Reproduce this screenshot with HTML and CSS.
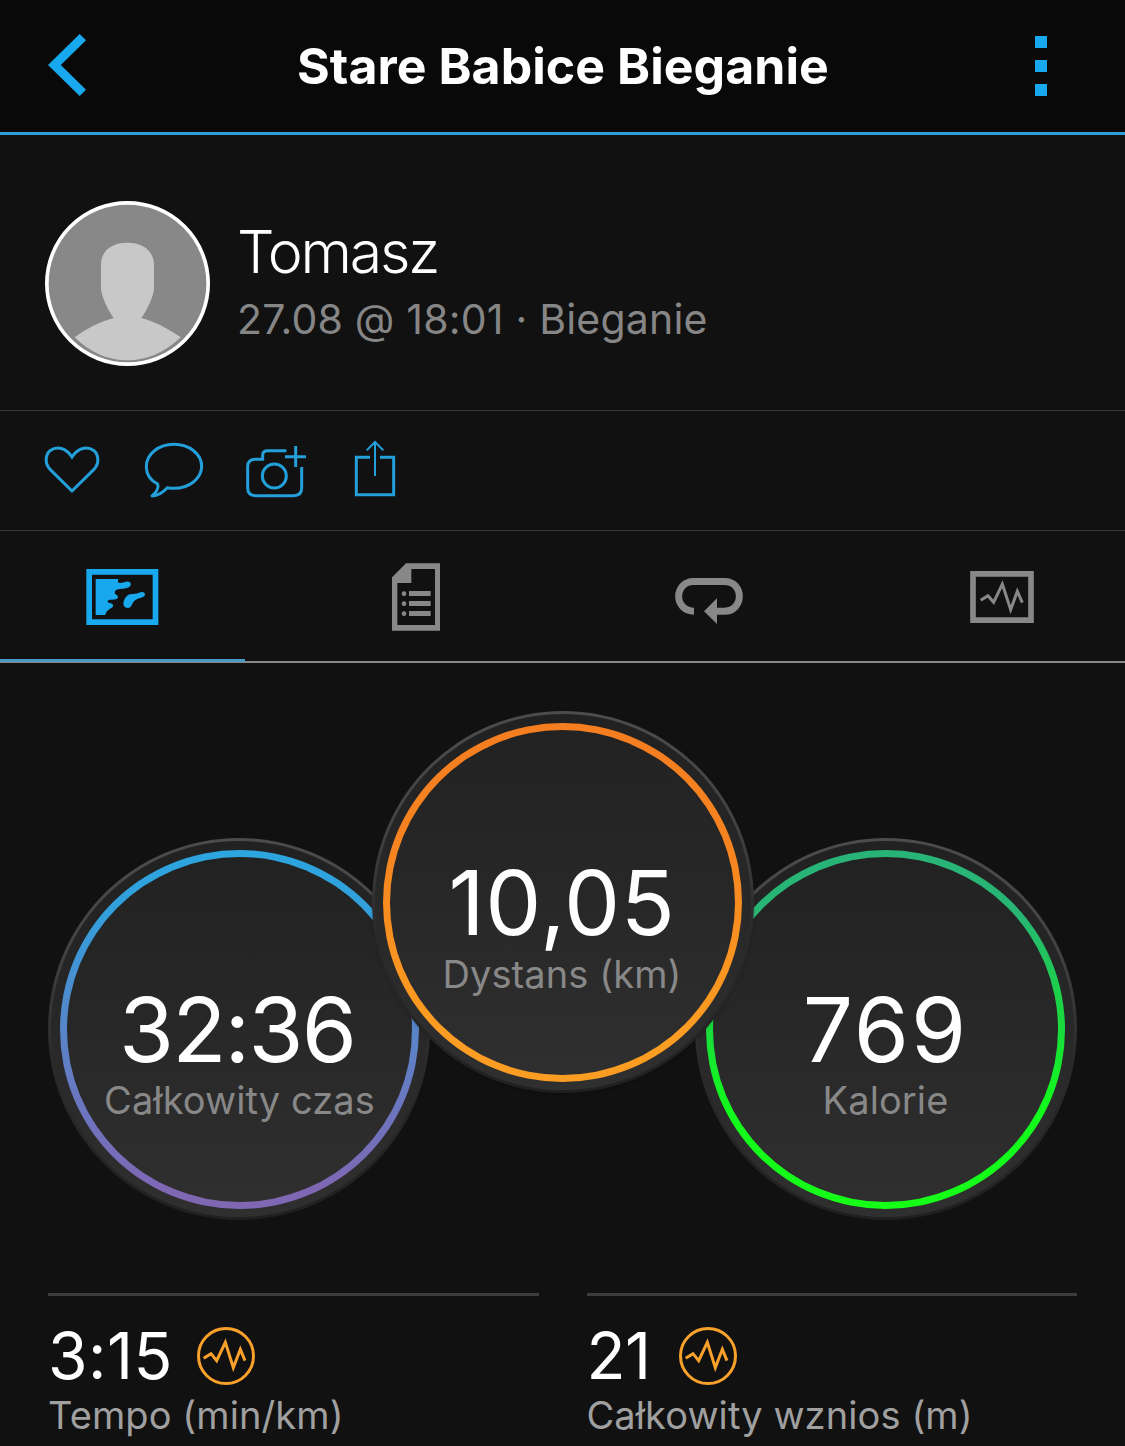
FILE: index.html
```html
<!DOCTYPE html>
<html lang="pl">
<head>
<meta charset="utf-8">
<title>Stare Babice Bieganie</title>
<link rel="stylesheet" href="styles.css">
</head>
<body>
<header class="topbar">
  <svg class="topbar-back" viewBox="0 0 38 62"><path d="M31.7 0 38 6.2 12.8 31 38 55.8 31.7 62 0 31Z"/></svg>
  <h1 class="topbar-title">Stare Babice Bieganie</h1>
  <svg class="topbar-menu" viewBox="0 0 12 60"><path d="M0 0h12v12H0zM0 24h12v12H0zM0 48h12v12H0z"/></svg>
</header>

<section class="profile">
  <svg class="avatar" viewBox="45 33 495 495">
    <circle cx="292.500" cy="280.500" r="242" fill="#888" stroke="#fff" stroke-width="11"/>
    <path fill="#c8c8c8" d="M134 442C170 415 212 394 251 384C233 359 215 320 213 297V222C215 180 246 158 292 158S369 180 372 222V297C370 320 352 359 334 384C373 394 414 415 452 442Q380 511 292 511T134 442Z"/>
  </svg>
  <div class="profile-text">
    <div class="profile-name">Tomasz</div>
    <div class="profile-meta">27.08 @ 18:01 · Bieganie</div>
  </div>
</section>

<nav class="actions">
  <svg width="60" height="58" viewBox="42 120 180 174"><path stroke-width="9" d="M126 273 61 209C43 191 46 165 60 152C81 137 108 143 126 171C144 143 171 137 192 152C206 165 209 191 191 209Z"/></svg>
  <svg width="61" height="58" viewBox="342 120 183 174"><path stroke-width="9" stroke-linejoin="round" d="M366 288C379 278 387 263 383 252C362 241 349 223 349 200C349 162 386 133 432 133S515 162 515 199S477 265 432 265Q422 265 412 263C400 276 386 287 366 288Z"/></svg>
  <svg width="63" height="58" viewBox="645 120 189 174"><path stroke-width="9" d="M769 152H713Q698 152 698 165V178H677Q653 178 653 200V264Q653 287 677 287H791Q815 287 815 264V201M797 138V201M765 170H828"/><circle stroke-width="9" cx="733" cy="228" r="36"/></svg>
  <svg width="50" height="58" viewBox="954 120 150 174"><path stroke-width="9" d="M1020 172H979V284H1091V172H1050"/><path stroke-width="6" d="M1035 228V126M1010 151 1035 126 1060 151"/></svg>
</nav>

<nav class="tabs">
  <div class="tab tab-active">
    <svg width="74" height="70" viewBox="77 66 222 210"><path fill="none" stroke="currentColor" stroke-width="17" d="M86.500 95.500H285.500V246.500H86.500Z"/><path d="M106 117H174C171 124 173 130 181 129L198 125C208 124 213 129 211 135C209 143 199 144 188 146C174 146 164 149 163 157C163 164 173 165 173 172C171 180 161 179 148 179C139 181 141 187 148 189C157 190 160 195 157 201C151 207 138 209 135 225H106ZM203 165C212 159 225 164 236 158C246 153 255 157 254 164C252 172 242 172 231 177C213 183 217 204 202 204C184 204 186 178 203 165Z"/></svg>
  </div>
  <div class="tab">
    <svg width="50" height="70" viewBox="993 66 150 210"><path fill-rule="evenodd" d="M1038 70H1140V272H996V112ZM1054 87V129H1012V255H1125V87Z"/><path d="M1047 153H1112V168H1047ZM1047 183H1112V198H1047ZM1047 213H1112V228H1047Z"/><circle cx="1032" cy="161" r="7"/><circle cx="1032" cy="191" r="7"/><circle cx="1032" cy="221" r="7"/></svg>
  </div>
  <div class="tab">
    <svg width="70" height="70" viewBox="102 66 210 210"><path fill="none" stroke="currentColor" stroke-width="21" d="M162 213.500C134 213.500 116 193 116 169S134 124.500 160 124.500H254C281 124.500 298 145 298 169S281 213.500 254 213.500H226"/><path d="M231 175V252L192 214Z"/></svg>
  </div>
  <div class="tab">
    <svg width="66" height="70" viewBox="987 66 198 210"><path fill="none" stroke="currentColor" stroke-width="17" d="M999 101.500H1173V240.500H999Z"/><path fill="none" stroke="currentColor" stroke-width="9" d="M1022 181 1044 167 1061 187 1087 132 1112 209 1132 154 1147 188"/></svg>
  </div>
</nav>

<main>
  <section class="gauges">
    <div class="gauge gauge-side gauge-time">
      <div class="gauge-ring">
        <div class="gauge-value">32:36</div>
        <div class="gauge-label">Całkowity czas</div>
      </div>
    </div>
    <div class="gauge gauge-main gauge-distance">
      <div class="gauge-ring">
        <div class="gauge-value">10,05</div>
        <div class="gauge-label">Dystans (km)</div>
      </div>
    </div>
    <div class="gauge gauge-side gauge-calories">
      <div class="gauge-ring">
        <div class="gauge-value">769</div>
        <div class="gauge-label">Kalorie</div>
      </div>
    </div>
  </section>

  <section class="stats">
    <div class="stat">
      <div class="stat-row">
        <span class="stat-value stat-pace">3:15</span>
        <svg class="stat-icon" viewBox="501 141 174 174"><circle cx="588" cy="228" r="82.500" stroke-width="9"/><path stroke-width="9" d="M521 235 543 221 560 242 586 187 610 263 631 208 645 242"/></svg>
      </div>
      <div class="stat-label">Tempo (min/km)</div>
    </div>
    <div class="stat">
      <div class="stat-row">
        <span class="stat-value stat-climb">21</span>
        <svg class="stat-icon" viewBox="501 141 174 174"><circle cx="588" cy="228" r="82.500" stroke-width="9"/><path stroke-width="9" d="M521 235 543 221 560 242 586 187 610 263 631 208 645 242"/></svg>
      </div>
      <div class="stat-label">Całkowity wznios (m)</div>
    </div>
  </section>
</main>
</body>
</html>
```
FILE: styles.css
```css
* { box-sizing: border-box; }

body {
  margin: 0;
  height: 1446px;
  overflow: hidden;
  background: #111;
  color: #fff;
  font-family: Inter, "Liberation Sans", sans-serif;
}

svg { display: block; flex: none; }

.topbar {
  display: flex;
  align-items: center;
  justify-content: space-between;
  height: 135px;
  padding: 0 78px 0 48px;
  background: #090909;
  border-bottom: 3px solid #2e9edb;
}
.topbar-back { width: 38px; height: 62px; margin-bottom: 2px; fill: #18a8ee; }
.topbar-menu { width: 12px; height: 60px; fill: #18a8ee; }
.topbar-title {
  margin: 0 0 0 5px;
  font-size: 50px;
  font-weight: 700;
  line-height: 60px;
  letter-spacing: 0.05px;
  white-space: nowrap;
}

.profile {
  display: flex;
  gap: 27px;
  height: 276px;
  padding: 66px 45px 0;
  border-bottom: 1px solid #363636;
}
.avatar { width: 165px; height: 165px; }
.profile-text { padding-top: 15px; white-space: nowrap; }
.profile-name { font-size: 59px; font-weight: 300; line-height: 71px; letter-spacing: -2.2px; }
.profile-meta { font-size: 41px; line-height: 65px; color: #868686; letter-spacing: 0.2px; }

.actions {
  display: flex;
  gap: 40px;
  height: 120px;
  padding: 29px 44px 0;
  border-bottom: 1px solid #363636;
}
.actions svg { fill: none; stroke: #239fda; }

.tabs {
  display: flex;
  justify-content: space-between;
  height: 132px;
  border-bottom: 2px solid #888;
}
.tab {
  display: flex;
  justify-content: center;
  width: 245px;
  height: 131px;
  padding-top: 31px;
  color: #888;
}
.tab svg { fill: currentColor; }
.tab-active { color: #18a8ee; border-bottom: 3px solid #4899c5; }

.gauges {
  display: flex;
  align-items: flex-start;
  height: 630px;
  padding: 48px 48px 0;
}
.gauge {
  flex: none;
  width: 382px;
  height: 382px;
  padding: 9px 8px 8px 9px;
  border: 3px solid transparent;
  border-radius: 50%;
  background:
    linear-gradient(#212121, #2f2f2f) padding-box,
    linear-gradient(#4c4c4c, #424242 30%, #2b2b2b 56%, #202020) border-box;
}
.gauge-side { margin-top: 127px; }
.gauge-main {
  z-index: 1;
  margin: 0 -58.500px;
  padding: 9px 9px 8px 8px;
  box-shadow: 0 2px 3px rgba(0, 0, 0, 0.15);
}
.gauge-calories { padding: 9px 9px 8px 8px; }
.gauge-ring {
  height: 359px;
  padding-top: 128px;
  border: 7px solid transparent;
  border-radius: 50%;
  background:
    linear-gradient(#222, #272727 45%, #2f2f2f) padding-box,
    linear-gradient(var(--ring)) border-box;
  text-align: center;
  white-space: nowrap;
}
.gauge-time { --ring: #2ca5df, #329fdb 18%, #5a83c8 52%, #7f67b4 94%; }
.gauge-distance { --ring: #f47d20, #f68420 35%, #fb9d22 85%; }
.gauge-calories { --ring: #28b478, #27b673 18%, #1bd642 45%, #12f91c 72%, #16ff18; }
.gauge-value { font-size: 89px; line-height: 90px; }
.gauge-time .gauge-value { padding-right: 5px; letter-spacing: -1.8px; }
.gauge-distance .gauge-value { letter-spacing: 0.7px; }
.gauge-calories .gauge-value { letter-spacing: 2px; }
.gauge-label { font-size: 38px; line-height: 52px; color: #888; letter-spacing: 0.1px; }
.gauge-side .gauge-label { line-height: 50px; }

.stats {
  display: grid;
  grid-template-columns: 1fr 1fr;
  gap: 48px;
  padding: 0 48px;
}
.stat { border-top: 3px solid #3c3c3c; padding-top: 20px; white-space: nowrap; }
.stat-row { display: flex; align-items: center; gap: 24px; height: 80px; }
.stat-value { font-size: 64px; line-height: 80px; }
.stat-pace { letter-spacing: 0.5px; }
.stat-climb { padding-right: 4px; letter-spacing: -0.5px; }
.stat-icon { width: 58px; height: 58px; fill: none; stroke: #f9a12b; }
.stat-label { font-size: 38px; line-height: 38px; color: #a0a0a0; letter-spacing: 0.1px; }
```
